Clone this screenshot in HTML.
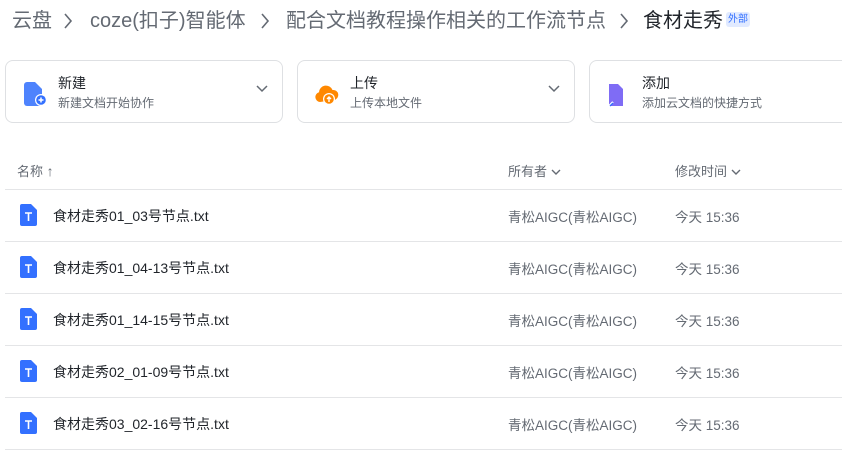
<!DOCTYPE html><html><head><meta charset="utf-8"><style>
body{margin:0;width:842px;height:460px;overflow:hidden;background:#fff;font-family:"Liberation Sans","Noto Sans CJK SC",sans-serif;position:relative}
.a{position:absolute;white-space:nowrap}
.bc{top:8px;font-size:20px;color:#646a73;line-height:26px}
.card{position:absolute;top:60px;height:63px;width:278px;border:1px solid #dee0e3;border-radius:8px;box-sizing:border-box}
.t1{position:absolute;left:52px;top:12px;font-size:14px;color:#1f2329}
.t2{position:absolute;left:52px;top:33px;font-size:12px;color:#646a73}
.chev{position:absolute;right:14px;top:24px}
.hd{top:161px;font-size:13px;color:#646a73}
.line{position:absolute;left:5px;right:0;height:1px;background:#e4e5e7}
.fn{font-size:14px;color:#1f2329}
.ow{font-size:13.5px;color:#646a73}
</style></head><body>
<div class="a bc" style="left:12px">云盘</div>
<svg class="a" style="left:63px;top:12px" width="10" height="18"><path d="M2 2l6 7-6 7" stroke="#646a73" stroke-width="1.6" fill="none"/></svg>
<div class="a bc" style="left:90px">coze(扣子)智能体</div>
<svg class="a" style="left:260px;top:12px" width="10" height="18"><path d="M2 2l6 7-6 7" stroke="#646a73" stroke-width="1.6" fill="none"/></svg>
<div class="a bc" style="left:286px">配合文档教程操作相关的工作流节点</div>
<svg class="a" style="left:619px;top:12px" width="10" height="18"><path d="M2 2l6 7-6 7" stroke="#646a73" stroke-width="1.6" fill="none"/></svg>
<div class="a bc" style="left:643px;color:#1f2329">食材走秀</div>
<div class="a" style="left:726px;top:12px;font-size:10px;color:#3370ff;background:#e1eaff;border-radius:3px;padding:1px 2px;line-height:13px">外部</div>

<div class="card" style="left:5px">
<svg style="position:absolute;left:16px;top:20px" width="26" height="26"><path d="M2 4a3 3 0 0 1 3-3h8l7 7v14a3 3 0 0 1-3 3H5a3 3 0 0 1-3-3z" fill="#4e83fd"/><circle cx="19" cy="19" r="6" fill="#fff"/><circle cx="19" cy="19" r="4.8" fill="#3370ff"/><path d="M16.5 19h5M19 16.5v5" stroke="#fff" stroke-width="1.5"/></svg>
<div class="t1">新建</div><div class="t2">新建文档开始协作</div>
<svg class="chev" width="12" height="8"><path d="M1 1l5 5 5-5" stroke="#646a73" stroke-width="1.5" fill="none"/></svg></div>
<div class="card" style="left:297px">
<svg style="position:absolute;left:16px;top:21px" width="26" height="26"><path d="M6 20a5 5 0 0 1-1-9.8A7 7 0 0 1 18.5 8 5 5 0 0 1 20 18" fill="#ff8800"/><circle cx="15" cy="17" r="6" fill="#fff"/><circle cx="15" cy="17" r="4.8" fill="#ff8800"/><path d="M15 20v-5M13 17l2-2 2 2" stroke="#fff" stroke-width="1.4" fill="none"/></svg>
<div class="t1">上传</div><div class="t2">上传本地文件</div>
<svg class="chev" width="12" height="8"><path d="M1 1l5 5 5-5" stroke="#646a73" stroke-width="1.5" fill="none"/></svg></div>
<div class="card" style="left:589px;width:270px">
<svg style="position:absolute;left:16px;top:21px" width="26" height="26"><path d="M3 2h9l5 5v17H3z" fill="#7f6cf5"/><path d="M3 24l4-4" stroke="#fff" stroke-width="2"/><path d="M4 24l3-3" stroke="#3370ff" stroke-width="1.3"/></svg>
<div class="t1">添加</div><div class="t2">添加云文档的快捷方式</div></div>

<div class="a hd" style="left:17px">名称 <span style="font-size:14px">↑</span></div>
<div class="a hd" style="left:508px">所有者 <svg width="10" height="7"><path d="M1 1l4 4 4-4" stroke="#646a73" stroke-width="1.4" fill="none"/></svg></div>
<div class="a hd" style="left:675px">修改时间 <svg width="10" height="7"><path d="M1 1l4 4 4-4" stroke="#646a73" stroke-width="1.4" fill="none"/></svg></div>
<div class="line" style="top:189px"></div>

<div id="rows"></div>
<script>
var n=["食材走秀01_03号节点.txt","食材走秀01_04-13号节点.txt","食材走秀01_14-15号节点.txt","食材走秀02_01-09号节点.txt","食材走秀03_02-16号节点.txt"],h="";
n.forEach(function(s,i){var y=190+52*i;
h+='<svg class="a" style="left:20px;top:'+(y+14)+'px" width="18" height="22"><path d="M0 2a2 2 0 0 1 2-2h9l6 6v14a2 2 0 0 1-2 2H2a2 2 0 0 1-2-2z" fill="#3370ff"/><path d="M5 9h7M8.5 9v8" stroke="#fff" stroke-width="1.6"/></svg>';
h+='<div class="a fn" style="left:53px;top:'+(y+16)+'px">'+s+'</div>';
h+='<div class="a ow" style="left:508px;top:'+(y+16)+'px">青松AIGC(青松AIGC)</div>';
h+='<div class="a ow" style="left:675px;top:'+(y+16)+'px">今天 15:36</div>';
h+='<div class="line" style="top:'+(y+51)+'px"></div>';});
document.getElementById("rows").innerHTML=h;
</script>
</body></html>
